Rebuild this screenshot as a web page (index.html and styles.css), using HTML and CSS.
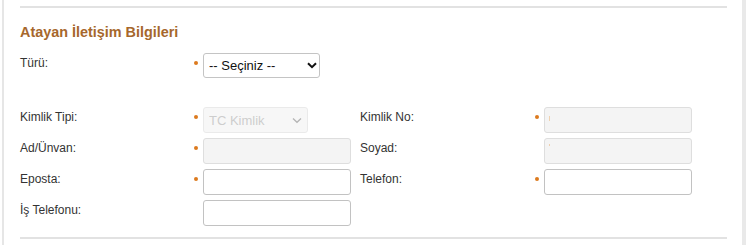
FILE: index.html
```html
<!DOCTYPE html>
<html lang="tr">
<head>
<meta charset="utf-8">
<link rel="stylesheet" href="styles.css">
</head>
<body>
<div class="frame">
  <section class="section">
    <h2 class="title">Atayan İletişim Bilgileri</h2>
    <div class="row-single">
      <label class="label">Türü:</label>
      <div class="field">
        <span class="req"></span>
        <span class="select-wrap">
          <select class="select">
            <option>-- Seçiniz --</option>
          </select>
          <svg class="chev" width="10" height="7" viewBox="0 0 10 7"><path d="M1 1.2 L5 5.2 L9 1.2" fill="none" stroke="#111" stroke-width="2"/></svg>
        </span>
      </div>
    </div>
    <div class="grid">
      <label class="label">Kimlik Tipi:</label>
      <div class="field">
        <span class="req"></span>
        <span class="select-wrap">
          <select class="select select-dis" disabled>
            <option>TC Kimlik</option>
          </select>
          <svg class="chev" width="10" height="7" viewBox="0 0 10 7"><path d="M1 1.5 L5 5.3 L9 1.5" fill="none" stroke="#b5b5b5" stroke-width="1.3"/></svg>
        </span>
      </div>
      <label class="label">Kimlik No:</label>
      <div class="field">
        <span class="req"></span>
        <input class="input input-dis mark-tall" type="text" readonly>
      </div>

      <label class="label">Ad/Ünvan:</label>
      <div class="field">
        <span class="req"></span>
        <input class="input input-dis" type="text" readonly>
      </div>
      <label class="label">Soyad:</label>
      <div class="field">
        <span class="req req-none"></span>
        <input class="input input-dis mark-short" type="text" readonly>
      </div>

      <label class="label">Eposta:</label>
      <div class="field">
        <span class="req"></span>
        <input class="input" type="text">
      </div>
      <label class="label">Telefon:</label>
      <div class="field">
        <span class="req"></span>
        <input class="input" type="text">
      </div>

      <label class="label">İş Telefonu:</label>
      <div class="field">
        <span class="req req-none"></span>
        <input class="input" type="text">
      </div>
    </div>
  </section>
</div>
</body>
</html>
```

FILE: styles.css
```css
html, body {
  margin: 0;
  padding: 0;
  background: #ffffff;
}

body {
  font-family: "Liberation Sans", Arial, sans-serif;
  color: #333333;
  font-size: 12px;
}

.frame {
  margin-left: 2px;
  width: 744px;
  height: 245px;
  border-left: 2px solid #e6e6e6;
  border-right: 4px solid #e9e9e9;
  box-sizing: border-box;
  padding: 6px 15px 0 16px;
}

.section {
  border-top: 2px solid #e2e2e2;
  border-bottom: 2px solid #e2e2e2;
  height: 233px;
  box-sizing: border-box;
}

.title {
  margin: 0;
  padding-top: 15px;
  font-size: 14.4px;
  line-height: 18px;
  font-weight: bold;
  color: #a6672c;
}

.row-single {
  display: grid;
  grid-template-columns: 171px auto;
  margin-top: 12px;
}

.grid {
  display: grid;
  grid-template-columns: 171px 169px 172px auto;
  row-gap: 5px;
  margin-top: 29px;
}

.label {
  display: block;
  padding-top: 3px;
  font-size: 12px;
  line-height: 15px;
  color: #333333;
}

.field {
  display: flex;
  align-items: flex-start;
}

.req {
  width: 4px;
  height: 4px;
  border-radius: 50%;
  background: #dc7a1e;
  margin: 8px 5px 0 3px;
  flex: none;
}

.req-none {
  background: transparent;
}

.select-wrap {
  position: relative;
  display: inline-block;
}

.select {
  -webkit-appearance: none;
  appearance: none;
  width: 117px;
  height: 25px;
  border: 1px solid #c4c4c4;
  border-radius: 3px;
  background: #ffffff;
  font-family: "Liberation Sans", Arial, sans-serif;
  font-size: 13px;
  color: #111111;
  padding: 0 0 0 5px;
  margin: 0;
  box-sizing: border-box;
}

.select-dis {
  width: 105px;
  height: 26px;
  background: #f5f5f5;
  border-color: #e2e2e2;
  color: #b9b9b9;
}

.chev {
  position: absolute;
  right: 3px;
  top: 9px;
  pointer-events: none;
}

.select-dis + .chev {
  right: 6px;
  top: 10px;
}

.input {
  width: 148px;
  height: 26px;
  box-sizing: border-box;
  border: 1px solid #c2c2c2;
  border-radius: 3px;
  background: #ffffff;
  margin: 0;
  padding: 0 5px;
  font-family: "Liberation Sans", Arial, sans-serif;
  font-size: 13px;
}

.input-dis {
  background-color: #f4f4f4;
  border-color: #dedede;
}

.mark-tall {
  background-image: linear-gradient(#f0d2b0, #f0d2b0);
  background-repeat: no-repeat;
  background-size: 1px 5px;
  background-position: 4px 8px;
}

.mark-short {
  background-image: linear-gradient(#f0cfae, #f0cfae);
  background-repeat: no-repeat;
  background-size: 1px 2px;
  background-position: 4px 5px;
}
```
